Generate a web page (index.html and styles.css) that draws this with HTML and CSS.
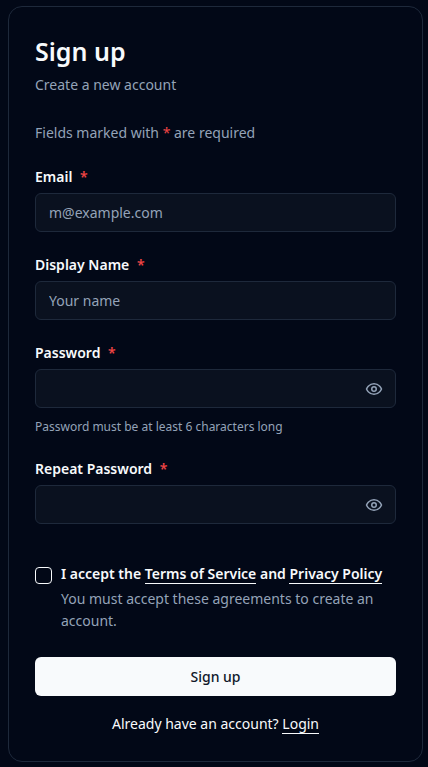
FILE: index.html
```html
<!DOCTYPE html>
<html lang="en">

<head>
  <meta charset="UTF-8" />
  <meta name="viewport" content="width=device-width, initial-scale=1.0" />
  <title>Sign up</title>
  <link rel="stylesheet" href="styles.css">
</head>

<body>
  <main class="card">
    <header class="card-header">
      <h1>Sign up</h1>
      <p class="muted">Create a new account</p>
    </header>

    <form class="signup-form">
      <p class="muted">Fields marked with <span class="required">*</span> are required</p>

      <div class="field">
        <label for="email">Email <span class="required">*</span></label>
        <input type="email" id="email" class="text-input" placeholder="m@example.com" required />
      </div>

      <div class="field">
        <label for="displayName">Display Name <span class="required">*</span></label>
        <input type="text" id="displayName" class="text-input" placeholder="Your name" required />
      </div>

      <div class="field">
        <label for="password">Password <span class="required">*</span></label>
        <div class="password-box">
          <input type="password" id="password" class="text-input" required />
          <button type="button" class="toggle-btn" aria-label="Show password" onclick="togglePassword('password')">
            <svg viewBox="0 0 24 24" width="18" height="18" fill="none" stroke="currentColor" stroke-width="2" stroke-linecap="round" stroke-linejoin="round" aria-hidden="true">
              <path d="M2 12s3-7 10-7 10 7 10 7-3 7-10 7-10-7-10-7Z" />
              <circle cx="12" cy="12" r="3" />
            </svg>
          </button>
        </div>
        <p class="hint">Password must be at least 6 characters long</p>
      </div>

      <div class="field">
        <label for="repeatPassword">Repeat Password <span class="required">*</span></label>
        <div class="password-box">
          <input type="password" id="repeatPassword" class="text-input" required />
          <button type="button" class="toggle-btn" aria-label="Show repeated password" onclick="togglePassword('repeatPassword')">
            <svg viewBox="0 0 24 24" width="18" height="18" fill="none" stroke="currentColor" stroke-width="2" stroke-linecap="round" stroke-linejoin="round" aria-hidden="true">
              <path d="M2 12s3-7 10-7 10 7 10 7-3 7-10 7-10-7-10-7Z" />
              <circle cx="12" cy="12" r="3" />
            </svg>
          </button>
        </div>
      </div>

      <div class="terms">
        <input type="checkbox" id="terms" class="checkbox" aria-describedby="termsNote" required />
        <div class="terms-text">
          <label for="terms">I accept the <a href="#">Terms of Service</a> and <a href="#">Privacy Policy</a></label>
          <p id="termsNote" class="muted">You must accept these agreements to create an account.</p>
        </div>
      </div>

      <button type="submit" class="submit-btn">Sign up</button>
    </form>

    <p class="login">Already have an account? <a href="#">Login</a></p>
  </main>

  <script>
    function togglePassword(id) {
      const input = document.getElementById(id);
      input.type = input.type === "password" ? "text" : "password";
    }
  </script>
</body>

</html>
```
FILE: styles.css
```css
* {
  box-sizing: border-box;
}

body {
  margin: 0;
  padding: 6px 5px 5px 8px;
  background-color: #020817;
  color: #f8fafc;
  font-family: "Segoe UI", "Noto Sans", "Open Sans", sans-serif;
  font-size: 14px;
  line-height: 22px;
}

h1,
p {
  margin: 0;
}

a {
  color: inherit;
  text-decoration: none;
  border-bottom: 1px solid #f8fafc;
}

.card {
  max-width: 480px;
  margin: 0 auto;
  padding: 26px;
  border: 1px solid #1e293b;
  border-radius: 14px;
}

.card-header {
  display: flex;
  flex-direction: column;
  gap: 5px;
  margin-bottom: 26px;
}

h1 {
  font-size: 25px;
  font-weight: 600;
  line-height: 36px;
}

.muted {
  color: #94a3b8;
}

.required {
  color: #ef4444;
}

.signup-form {
  display: flex;
  flex-direction: column;
  gap: 22px;
}

.field label,
.terms label {
  display: block;
  font-weight: 600;
}

.field label {
  margin-bottom: 5px;
}

.field .required {
  margin-left: 4px;
}

.text-input {
  display: block;
  width: 100%;
  height: 39px;
  padding: 0 13px;
  background-color: #0a111f;
  border: 1px solid #1e293b;
  border-radius: 6px;
  color: #f8fafc;
  font: inherit;
}

.text-input::placeholder {
  color: #94a3b8;
  opacity: 1;
}

.password-box {
  position: relative;
}

.password-box .text-input {
  padding-right: 44px;
}

/* eye button sits over the right end of the input */
.toggle-btn {
  position: absolute;
  top: 0;
  right: 0;
  height: 100%;
  padding: 0 13px;
  display: flex;
  align-items: center;
  background: none;
  border: none;
  color: #94a3b8;
  cursor: pointer;
}

.hint {
  margin-top: 10px;
  color: #94a3b8;
  font-size: 12px;
  line-height: 18px;
}

.terms {
  display: flex;
  align-items: flex-start;
  gap: 9px;
  margin: 17px 0 3px;
}

.terms-text {
  display: flex;
  flex-direction: column;
  gap: 3px;
}

.checkbox {
  appearance: none;
  flex-shrink: 0;
  width: 17px;
  height: 17px;
  margin: 4px 0 0;
  border: 1px solid #f8fafc;
  border-radius: 4px;
}

.checkbox:checked {
  background-color: #f8fafc;
}

.submit-btn {
  height: 39px;
  background-color: #f8fafc;
  border: none;
  border-radius: 6px;
  color: #0f172a;
  font: inherit;
  font-weight: 500;
  cursor: pointer;
}

.submit-btn:hover {
  background-color: #e2e8f0;
}

.login {
  margin-top: 17px;
  text-align: center;
}
```
